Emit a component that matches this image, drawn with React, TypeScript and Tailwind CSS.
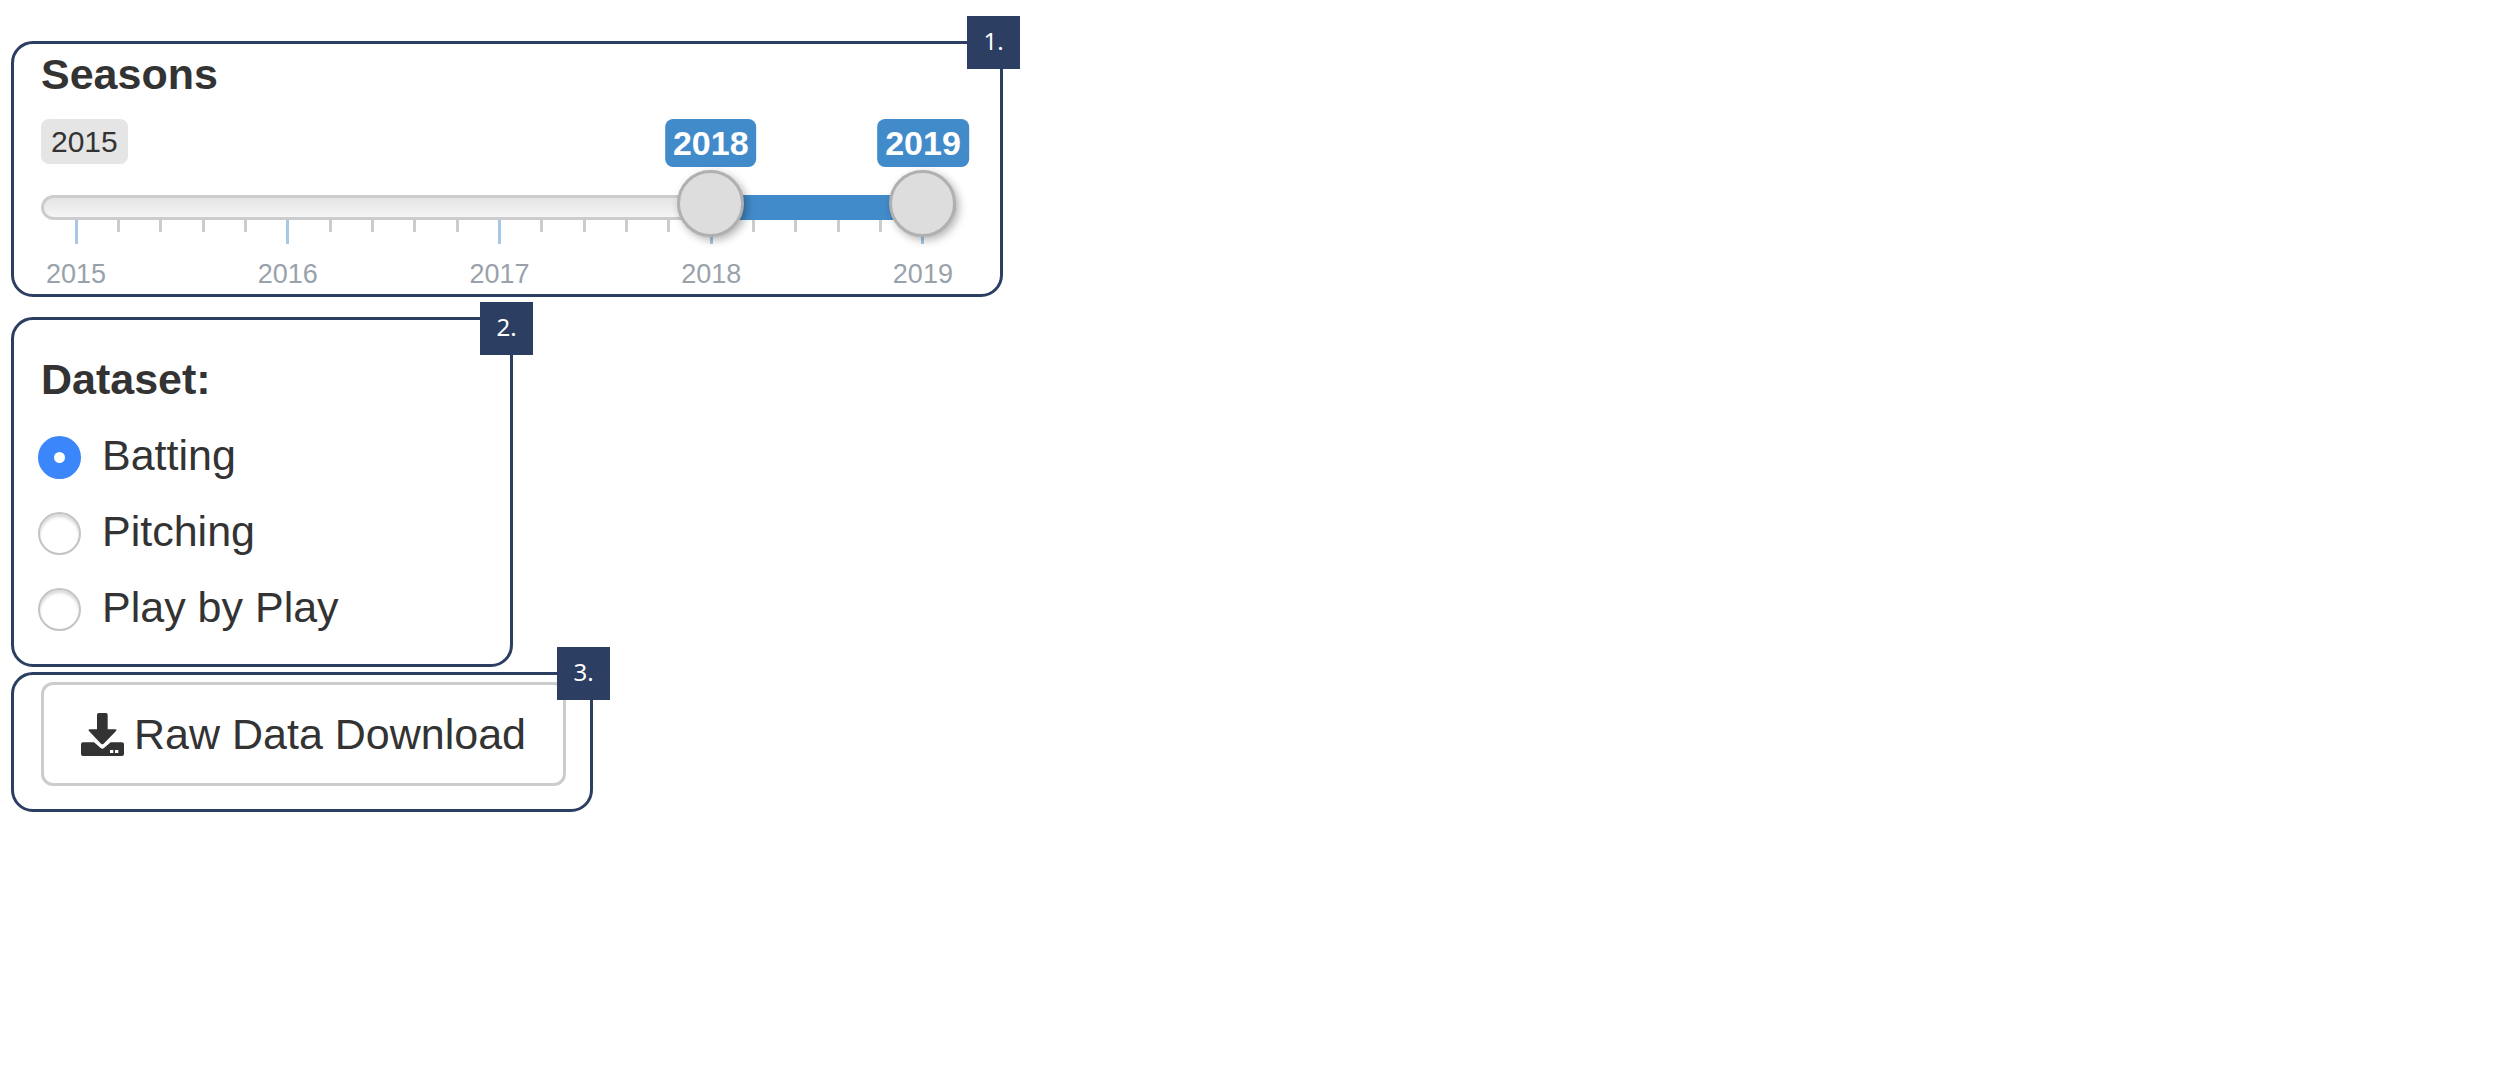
import { useState } from 'react';
import type { ReactNode } from 'react';

const MIN_YEAR = 2015;
const MAX_YEAR = 2019;
const TICKS_PER_YEAR = 5;

const datasets = ['Batting', 'Pitching', 'Play by Play'];

interface PanelProps {
  step: number;
  className: string;
  badgeClassName?: string;
  children: ReactNode;
}

function Panel({ step, className, badgeClassName = '-top-7 -right-5', children }: PanelProps) {
  return (
    <section className={`relative rounded-[22px] border-3 border-[#2c3e61] pl-[27px] ${className}`}>
      {children}
      <span
        className={`absolute z-20 flex size-[53px] items-center justify-center bg-[#2c3e61] pb-1 font-['Noto_Sans',sans-serif] text-2xl text-white ${badgeClassName}`}
      >
        {step}.
      </span>
    </section>
  );
}

const thumbInput =
  'pointer-events-none absolute inset-0 m-0 h-full w-full appearance-none bg-transparent outline-none ' +
  '[&::-webkit-slider-thumb]:pointer-events-auto [&::-webkit-slider-thumb]:size-[67px] [&::-webkit-slider-thumb]:cursor-pointer ' +
  '[&::-webkit-slider-thumb]:appearance-none [&::-webkit-slider-thumb]:rounded-full [&::-webkit-slider-thumb]:border-3 ' +
  '[&::-webkit-slider-thumb]:border-[#b0b0b0] [&::-webkit-slider-thumb]:bg-[#dddddd] [&::-webkit-slider-thumb]:shadow-[3px_3px_9px_rgba(0,0,0,0.3)]';

function SeasonSlider() {
  const [from, setFrom] = useState(2018);
  const [to, setTo] = useState(2019);

  const percent = (year: number) => ((year - MIN_YEAR) / (MAX_YEAR - MIN_YEAR)) * 100;
  const tickCount = (MAX_YEAR - MIN_YEAR) * TICKS_PER_YEAR + 1;

  return (
    <div className="mt-5">
      {/* Value labels */}
      <div className="relative flex h-12 items-start">
        <span className="flex h-[45px] items-center rounded-lg bg-[#e5e5e5] px-[10px] text-[30px] text-[#333333]">
          {MIN_YEAR}
        </span>
        <div className="absolute inset-x-[33px] top-0">
          {[from, to].map((year, i) => (
            <output
              key={i}
              className="absolute flex h-12 -translate-x-1/2 items-center rounded-lg bg-[#428bca] px-2 text-[34px] font-bold text-white"
              style={{ left: `${percent(year)}%` }}
            >
              {year}
            </output>
          ))}
        </div>
      </div>

      {/* Track and handles */}
      <div className="relative z-10 mt-[3px] h-[67px]">
        <div className="absolute inset-x-0 top-[25px] h-[25px] rounded-full border-3 border-[#cccccc] bg-linear-to-b from-[#e4e4e4] to-[#f5f5f5]" />
        <div className="absolute inset-x-[33px] top-[25px] h-[25px]">
          <div
            className="absolute inset-y-0 bg-[#428bca]"
            style={{ left: `${percent(from)}%`, right: `${100 - percent(to)}%` }}
          />
        </div>
        <input
          type="range"
          aria-label="First season"
          min={MIN_YEAR}
          max={MAX_YEAR}
          value={from}
          onChange={(e) => setFrom(Math.min(Number(e.target.value), to))}
          className={thumbInput}
        />
        <input
          type="range"
          aria-label="Last season"
          min={MIN_YEAR}
          max={MAX_YEAR}
          value={to}
          onChange={(e) => setTo(Math.max(Number(e.target.value), from))}
          className={thumbInput}
        />
      </div>

      {/* Scale */}
      <div className="-mt-[17px] flex justify-between pr-[33px] pl-[35px]">
        {Array.from({ length: tickCount }, (_, i) =>
          i % TICKS_PER_YEAR === 0 ? (
            <div key={i} className="flex w-0 flex-col items-center gap-[14px]">
              <span className="h-6 w-[3px] bg-[#a6c8e6]" />
              <span className="text-[27px] leading-8 text-[#99a2aa]">{MIN_YEAR + i / TICKS_PER_YEAR}</span>
            </div>
          ) : (
            <div key={i} className="flex w-0 justify-center">
              <span className="h-3 w-[3px] shrink-0 bg-[#cccccc]" />
            </div>
          )
        )}
      </div>
    </div>
  );
}

function DownloadIcon() {
  return (
    <svg viewBox="0 0 129 129" className="size-[43px] shrink-0" fill="#333333" aria-hidden="true">
      <path d="M53 0h22q5 0 5 5v44h23q6 0 2 5L68 92q-4 4-8 0L24 54q-4-5 2-5h22V5q0-5 5-5z" />
      <path d="M6 88h33l20 17q5 4 10 0l20-17h34q6 0 6 6v29q0 6-6 6H6q-6 0-6-6V94q0-6 6-6z" />
      <path d="M87 111h10v9H87zM102 111h10v9h-10z" fill="#ffffff" />
    </svg>
  );
}

export default function App() {
  const [dataset, setDataset] = useState('Batting');

  return (
    <main className="min-h-screen bg-white px-[11px] pt-[41px] font-['Liberation_Sans',Arial,sans-serif] text-[43px] leading-[50px] text-[#333333]">
      <Panel step={1} className="max-w-[992px] pt-[5px] pr-[44px] pb-1">
        <h2 className="font-bold">Seasons</h2>
        <SeasonSlider />
      </Panel>

      <Panel step={2} className="mt-5 max-w-[502px] pt-[34px] pb-8" badgeClassName="-top-[18px] -right-[23px]">
        <fieldset className="flex flex-col gap-[26px]">
          <legend className="mb-[26px] font-bold">Dataset:</legend>
          {datasets.map((name) => (
            <label key={name} className="-ml-[3px] flex items-end gap-[21px]">
              <input
                type="radio"
                name="dataset"
                value={name}
                checked={dataset === name}
                onChange={() => setDataset(name)}
                className="mb-px size-[43px] appearance-none rounded-full border-2 border-[#c4c4c4] bg-white shadow-[inset_0_3px_3px_rgba(0,0,0,0.15)] checked:border-[16px] checked:border-[#3b86fb] checked:shadow-none"
              />
              {name}
            </label>
          ))}
        </fieldset>
      </Panel>

      <Panel step={3} className="mt-[5px] w-fit pt-[7px] pr-6 pb-[23px]">
        <button
          type="button"
          className="flex h-[104px] cursor-pointer items-center gap-[10px] rounded-xl border-3 border-[#cccccc] bg-white px-[37px]"
        >
          <DownloadIcon />
          Raw Data Download
        </button>
      </Panel>
    </main>
  );
}
